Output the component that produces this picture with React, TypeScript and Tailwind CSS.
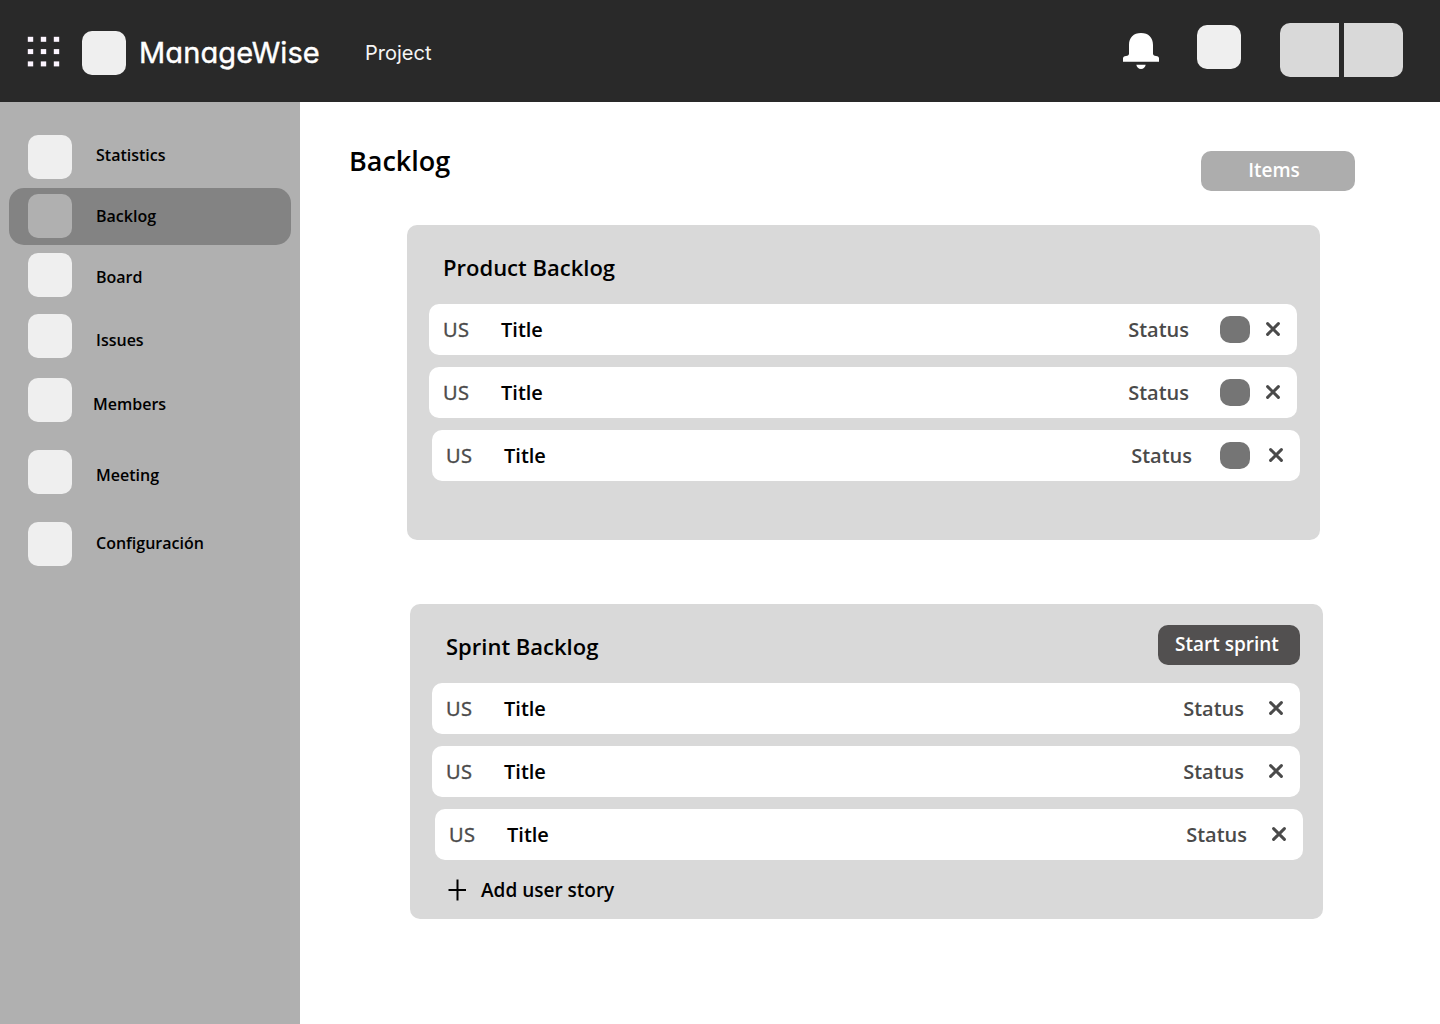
import React from "react";

type NavItem = {
  label: string;
  row: string;
  tile: string;
  text: string;
};

const navItems: NavItem[] = [
  { label: "Statistics", row: "mt-[33px] h-11", tile: "bg-[#efefef]", text: "ml-6 mt-2" },
  { label: "Backlog", row: "mt-[9px] h-[57px] bg-[#838383] pt-1.5", tile: "bg-[#b0b0b0]", text: "ml-6 mt-2.5" },
  { label: "Board", row: "mt-2 h-11", tile: "bg-[#efefef]", text: "ml-6 mt-3" },
  { label: "Issues", row: "mt-[17px] h-11", tile: "bg-[#efefef]", text: "ml-6 mt-3.5" },
  { label: "Members", row: "mt-5 h-11", tile: "bg-[#efefef]", text: "ml-[21px] mt-3.5" },
  { label: "Meeting", row: "mt-7 h-11", tile: "bg-[#efefef]", text: "ml-6 mt-[13px]" },
  { label: "Configuración", row: "mt-7 h-11", tile: "bg-[#efefef]", text: "ml-6 mt-[9px]" },
];

function GridIcon() {
  return (
    <svg width="33" height="31" viewBox="0 0 33 31" fill="#fcf5ff" className="ml-[27px] mt-9 shrink-0">
      {[0.8, 13.1, 25.4].map((y) =>
        [0.8, 13.8, 26.8].map((x) => <rect key={`${x}-${y}`} x={x} y={y} width="5.4" height="5" />),
      )}
    </svg>
  );
}

function BellIcon() {
  return (
    <svg width="36" height="37" viewBox="0 0 36 37" fill="#fff" className="mt-[33px] shrink-0">
      <path d="M6 12C6 4.5 10.500 0 18 0S30 4.500 30 12V20.500C30 22.300 31 22.800 33 23C35 23.200 36 24 36 25.500V28.800H0V25.500C0 24 1 23.200 3 23C5 22.800 6 22.300 6 20.500Z" />
      <path d="M13.300 31.800H22.700C22.200 34.500 20.500 36 18 36S13.800 34.500 13.300 31.800Z" />
    </svg>
  );
}

function CloseIcon() {
  return (
    <svg width="14" height="14" viewBox="0 0 14 14" stroke="#4a4a4a" strokeWidth="3" strokeLinecap="round" className="mr-[17px] mt-[18px] shrink-0">
      <path d="M1.600 1.600L12.400 12.400M12.400 1.600L1.600 12.400" />
    </svg>
  );
}

function Story({ shifted, marker }: { shifted?: boolean; marker?: boolean }) {
  return (
    <li className={`flex h-[51px] w-[868px] rounded-[10px] bg-white text-xl leading-7 font-semibold ${shifted ? "ml-[25px]" : "ml-[22px]"}`}>
      <span className="ml-3.5 mt-3 w-[58px] font-normal tracking-[0.3px] text-[#4a4a4a] [-webkit-text-stroke:0.4px_currentColor]">US</span>
      <span className="mt-3">Title</span>
      <span className={`mt-3 ml-auto text-[#4a4a4a] ${marker ? (shifted ? "mr-7" : "mr-[31px]") : "mr-[25px]"}`}>Status</span>
      {marker && <span className={`mt-3 h-[27px] w-[30px] rounded-[10px] bg-[#757575] ${shifted ? "mr-[19px]" : "mr-4"}`} />}
      <CloseIcon />
    </li>
  );
}

export default function App() {
  return (
    <div className="flex h-[1024px] w-[1440px] flex-col overflow-hidden bg-white font-['Open_Sans',sans-serif] text-black">
      <header className="flex h-[102px] shrink-0 items-start bg-[#292929]">
        <GridIcon />
        <div className="ml-[22px] mt-[31px] size-11 rounded-[10px] bg-[#efefef]" />
        <div className="ml-[13px] mt-[33px] w-[181px] whitespace-nowrap font-['Inter',sans-serif] text-[29px] leading-10 font-normal tracking-[0.1px] text-white [-webkit-text-stroke:0.4px_currentColor] [font-feature-settings:'cv11']">ManageWise</div>
        <div className="ml-[45px] mt-[39px] font-['Inter',sans-serif] text-xl leading-7 font-normal text-[#f5f5f5]">Project</div>
        <div className="ml-auto flex items-start">
          <BellIcon />
          <div className="ml-[38px] mt-[25px] size-11 rounded-[10px] bg-[#efefef]" />
          <div className="ml-[39px] mt-[23px] mr-[37px] flex gap-[5px]">
            <div className="h-[54px] w-[59px] rounded-l-[10px] bg-[#d9d9d9]" />
            <div className="h-[54px] w-[59px] rounded-r-[10px] bg-[#d9d9d9]" />
          </div>
        </div>
      </header>
      <div className="flex flex-1">
        <nav className="flex w-[300px] shrink-0 flex-col bg-[#b0b0b0]">
          {navItems.map((item) => (
            <a key={item.label} className={`mx-[9px] flex items-start rounded-[15px] pl-[19px] ${item.row}`}>
              <span className={`size-11 rounded-[10px] ${item.tile}`} />
              <span className={`text-base leading-6 font-semibold ${item.text}`}>{item.label}</span>
            </a>
          ))}
        </nav>
        <main className="flex-1">
          <div className="flex h-[123px] items-start justify-between pr-[85px] pl-[49px]">
            <h1 className="mt-[39px] text-[27px] leading-10 font-semibold">Backlog</h1>
            <button className="mt-[49px] h-10 w-[154px] rounded-[10px] bg-[#adadad] pr-2 pb-0.5 text-[19px] font-semibold text-white">Items</button>
          </div>
          <section className="ml-[107px] h-[315px] w-[913px] rounded-[10px] bg-[#d9d9d9]">
            <h2 className="h-[79px] pt-[26px] pl-9 text-[22px] leading-8 font-semibold">Product Backlog</h2>
            <ul className="flex flex-col gap-3">
              <Story marker />
              <Story marker />
              <Story marker shifted />
            </ul>
          </section>
          <section className="mt-16 ml-[110px] h-[315px] w-[913px] rounded-[10px] bg-[#d9d9d9]">
            <div className="flex h-[79px] items-start justify-between pr-[23px] pl-9">
              <h2 className="pt-[26px] text-[22px] leading-8 font-semibold">Sprint Backlog</h2>
              <button className="mt-[21px] h-10 w-[142px] rounded-[10px] bg-[#525050] pr-1 pb-0.5 text-[19px] font-semibold text-white">Start sprint</button>
            </div>
            <ul className="flex flex-col gap-3">
              <Story />
              <Story />
              <Story shifted />
            </ul>
            <button className="mt-4 ml-[38px] flex items-start">
              <svg width="19" height="22" viewBox="0 0 19 22" stroke="#000" strokeWidth="2" className="mt-[3px]">
                <path d="M0.500 11H18M9.500 0.500V21.500" />
              </svg>
              <span className="ml-3.5 text-[19px] leading-7 font-semibold">Add user story</span>
            </button>
          </section>
        </main>
      </div>
    </div>
  );
}
